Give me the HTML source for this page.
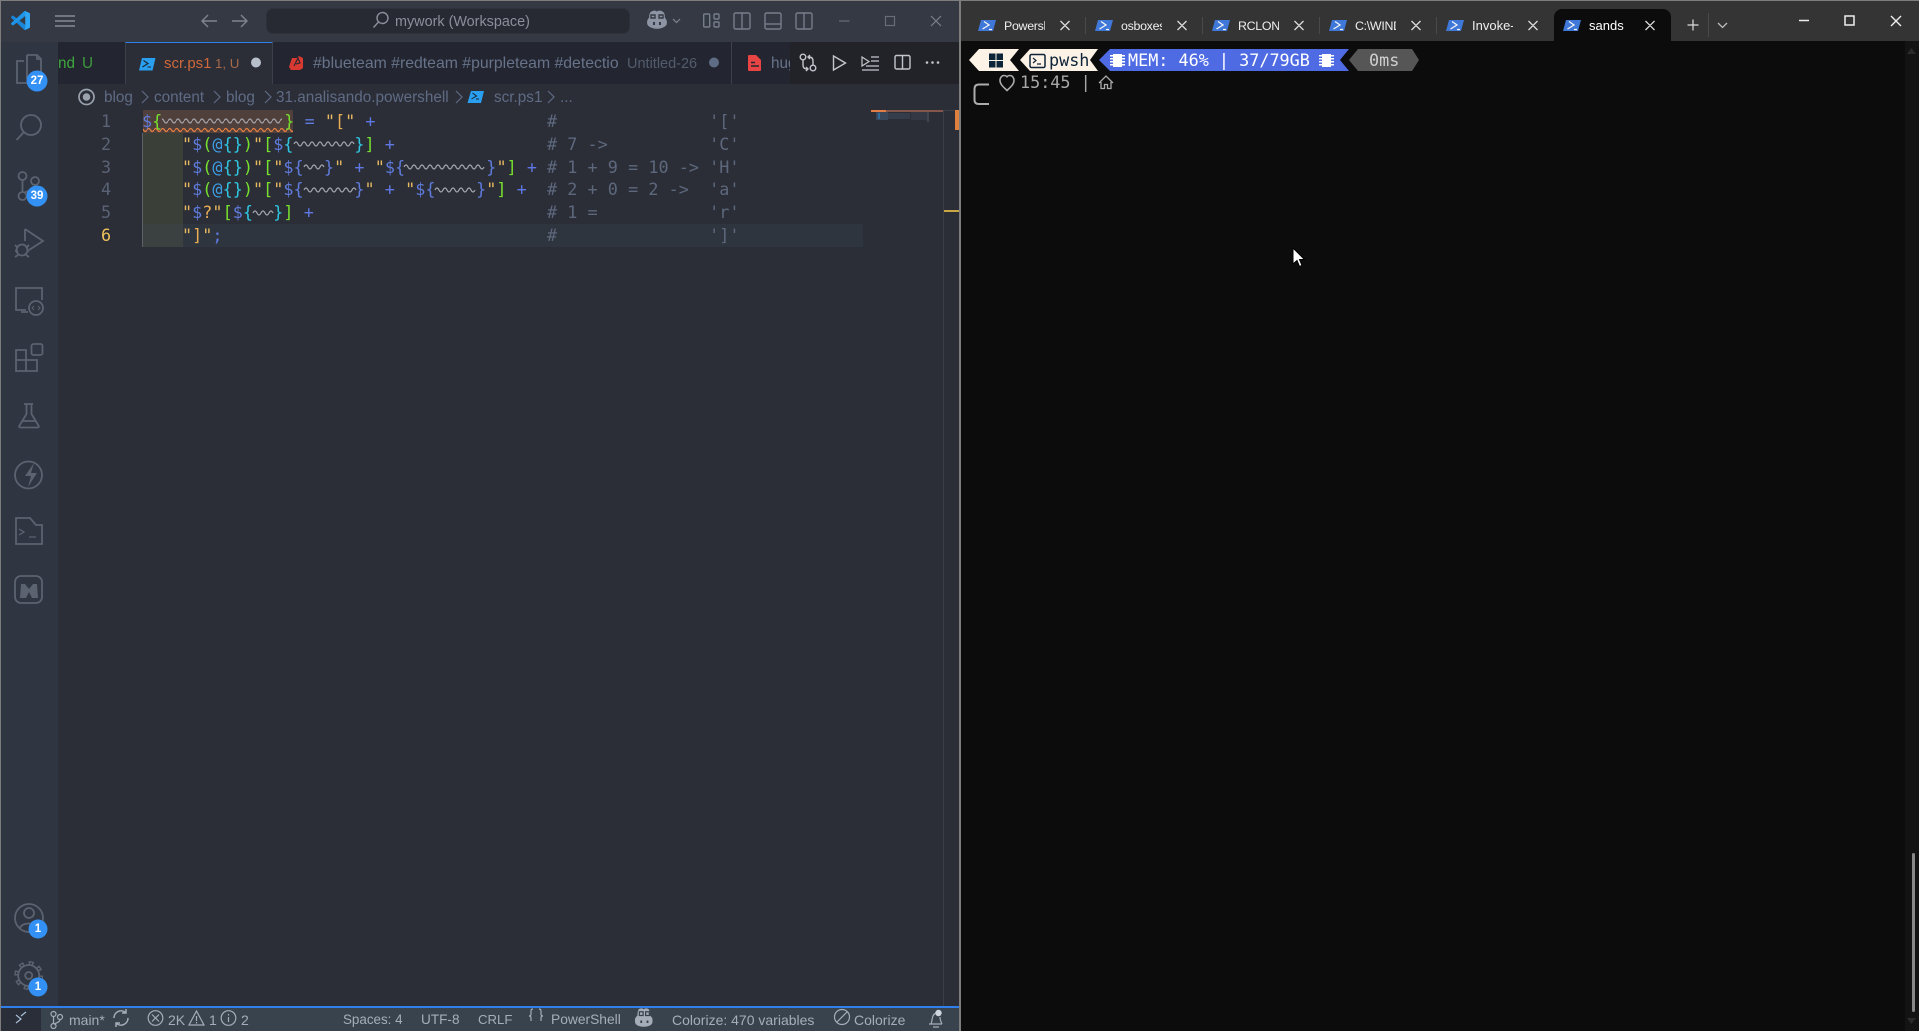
<!DOCTYPE html>
<html><head><meta charset="utf-8"><title>VS Code and Terminal</title>
<style>
html,body{margin:0;padding:0;width:1919px;height:1031px;overflow:hidden;background:#0c0c0c}
#r{position:relative;width:1919px;height:1031px;overflow:hidden;font-family:"Liberation Sans",sans-serif}
.a{position:absolute;white-space:pre}
svg{position:absolute;left:0;top:0;overflow:visible}
.t{font-size:15.3px;line-height:20px}
.l{position:absolute;left:142px;height:22.8px;line-height:22.8px;font-family:"DejaVu Sans Mono","Liberation Mono",monospace;font-size:16.8px;letter-spacing:.03px;white-space:pre;color:#5f7be0}
.n{position:absolute;left:87.5px;width:37px;text-align:center;height:22.8px;line-height:22.8px;font-family:"DejaVu Sans Mono",monospace;font-size:16.8px;color:#5a6375}
.c{position:absolute;left:547px;height:22.8px;line-height:22.8px;font-family:"DejaVu Sans Mono",monospace;font-size:16.8px;letter-spacing:.03px;white-space:pre;color:#5d687d}
i{font-style:normal}
.y{color:#e6b860}.b{color:#5f7bdc}.g{color:#76e02e}.u{color:#2fc6e0}.k{color:#3d9fe6}.p{color:#5f78e6}.o{color:#e8ad55}
.st{position:absolute;top:1010px;font-size:14px;line-height:20px;color:#a5adb8;white-space:pre}
.tb{position:absolute;top:16.5px;font-size:13px;line-height:18px;color:#eee;white-space:pre;overflow:hidden}
.m{position:absolute;font-family:"DejaVu Sans Mono",monospace;font-size:16.8px;line-height:22px;white-space:pre}
</style></head><body><div id="r">

<!-- VS Code backgrounds -->
<div class="a" style="left:0;top:0;width:960px;height:1031px;background:#2b2e37"></div>
<div class="a" style="left:0;top:0;width:960px;height:42px;background:#353943"></div>
<div class="a" style="left:0;top:0;width:1919px;height:1px;background:#7d7d7d"></div>
<div class="a" style="left:0;top:0;width:1px;height:1031px;background:#7d7d7d"></div>
<div class="a" style="left:1px;top:42px;width:57px;height:964px;background:#2f3641"></div>
<div class="a" style="left:58px;top:42px;width:902px;height:42px;background:#232630"></div>
<div class="a" style="left:125px;top:42px;width:148px;height:42px;background:#2b2e37;border-top:1px solid #2f80ed;border-left:1px solid #3c404a;border-right:1px solid #3c404a;box-sizing:border-box"></div>
<div class="a" style="left:731px;top:42px;width:1px;height:42px;background:#3c404a"></div>
<div class="a" style="left:790px;top:42px;width:170px;height:42px;background:#212329"></div>
<div class="a" style="left:266px;top:8px;width:364px;height:26px;background:#272a33;border-radius:7px;border:1px solid #2f323b;box-sizing:border-box"></div>
<div class="a" style="left:1px;top:1006px;width:959px;height:25px;background:#39434e"></div>
<div class="a" style="left:1px;top:1006px;width:40px;height:25px;background:#2a2e39"></div>
<div class="a" style="left:1px;top:1006px;width:959px;height:1.5px;background:#2f80ed"></div>

<!-- editor deco -->
<div class="a" style="left:183px;top:224px;width:680px;height:23px;background:#2f353e"></div>
<div class="a" style="left:143px;top:110px;width:150px;height:23px;background:#50403b"></div>
<div class="a" style="left:143px;top:133px;width:40px;height:91px;background:#3a3f38"></div>
<div class="a" style="left:143px;top:224px;width:40px;height:23px;background:#3b4040"></div>
<div class="a" style="left:142px;top:133px;width:1px;height:114px;background:#5d6168"></div>
<!-- minimap + ruler -->
<div class="a" style="left:871px;top:110px;width:15px;height:2px;background:#e27d43"></div>
<div class="a" style="left:886px;top:110px;width:57px;height:2px;background:#84574a"></div>
<div class="a" style="left:876px;top:112px;width:12px;height:8px;background:#38475a"></div>
<div class="a" style="left:878px;top:113px;width:2px;height:6px;background:#2f6c9c"></div>
<div class="a" style="left:888px;top:113px;width:22px;height:6px;background:#353c4a"></div>
<div class="a" style="left:911px;top:112px;width:18px;height:8px;background:#343844"></div>
<div class="a" style="left:927px;top:112px;width:2px;height:10px;background:#40454f"></div>
<div class="a" style="left:943px;top:110px;width:1px;height:896px;background:#3a3e48"></div>
<div class="a" style="left:943px;top:110px;width:16px;height:1px;background:#3a3e48"></div>
<div class="a" style="left:955px;top:110px;width:4px;height:20px;background:#e0803f"></div>
<div class="a" style="left:944px;top:210px;width:15px;height:2px;background:#c9a545"></div>

<!-- Terminal backgrounds -->
<div class="a" style="left:959px;top:0;width:2px;height:1031px;background:#7d7d7d"></div>
<div class="a" style="left:961px;top:1px;width:958px;height:40px;background:#343434"></div>
<div class="a" style="left:961px;top:41px;width:958px;height:990px;background:#0c0c0c"></div>
<div class="a" style="left:1905px;top:41px;width:14px;height:990px;background:#131313"></div>
<div class="a" style="left:1554px;top:9px;width:117px;height:33px;background:#0c0c0c;border-radius:8px 8px 0 0"></div>

<svg width="1919" height="1031" viewBox="0 0 1919 1031" fill="none">
<defs>
<pattern id="w" width="8" height="8" patternUnits="userSpaceOnUse" patternTransform="translate(0 117)"><path d="M0 4 Q2 0 4 4 T8 4" stroke="#a3a5ae" stroke-width="1.2" fill="none"/></pattern>
<pattern id="ow" width="7" height="6" patternUnits="userSpaceOnUse" patternTransform="translate(0 127)"><path d="M0 3 Q1.75 0 3.5 3 T7 3" stroke="#e27d43" stroke-width="1.3" fill="none"/></pattern>
</defs>
<!-- waves -->
<rect x="162" y="117" width="120" height="8" fill="url(#w)"/>
<rect x="143" y="127" width="150" height="6" fill="url(#ow)"/>
<g stroke="#a3a5ae" stroke-width="1.2">
<path d="M294 144q2-4 4 0t4 0 4 0 4 0 4 0 4 0 4 0 4 0 4 0 4 0 4 0 4 0 4 0 4 0 4 0"/>
<path d="M304 167q2-4 4 0t4 0 4 0 4 0 4 0"/>
<path d="M404 167q2-4 4 0t4 0 4 0 4 0 4 0 4 0 4 0 4 0 4 0 4 0 4 0 4 0 4 0 4 0 4 0 4 0 4 0 4 0 4 0 4 0"/>
<path d="M304 190q2-4 4 0t4 0 4 0 4 0 4 0 4 0 4 0 4 0 4 0 4 0 4 0 4 0 4 0"/>
<path d="M435 190q2-4 4 0t4 0 4 0 4 0 4 0 4 0 4 0 4 0 4 0 4 0"/>
<path d="M253 213q2-4 4 0t4 0 4 0 4 0 4 0"/>
</g>

<!-- vscode logo -->
<g transform="translate(11 11) scale(.19)">
<path d="M96.500 89.200 75.800 99.100c-2.400 1.200-5.200.7-7.100-1.200L1.300 36.500c-1.800-1.700-1.800-4.500 0-6.200l5.500-5c1.500-1.300 3.700-1.400 5.300-.2l81.100 61.500c2.700 2 6.600.1 6.600-3.300v.2c0 2.400-1.400 4.600-3.300 5.900z" fill="#1a86d8"/>
<path d="M96.500 10.800 75.800.9c-2.400-1.200-5.200-.7-7.100 1.200L1.300 63.500c-1.800 1.700-1.800 4.500 0 6.200l5.500 5c1.500 1.300 3.700 1.400 5.300.2L93.200 13.400c2.700-2 6.600-.1 6.600 3.300v-.2c0-2.400-1.400-4.600-3.300-5.700z" fill="#1f95ea"/>
<path d="M75.800 99.100c-2.400 1.200-5.200.7-7.100-1.200 2.300 2.300 6.300.7 6.300-2.600V4.700c0-3.300-4-4.900-6.300-2.600 1.900-1.900 4.700-2.400 7.100-1.200l20.600 9.900c2.200 1 3.600 3.200 3.600 5.600v67.400c0 2.400-1.400 4.600-3.600 5.600z" fill="#2fa5f5"/>
</g>
<!-- hamburger -->
<path d="M55 16h20M55 21h20M55 26h20" stroke="#868b96" stroke-width="1.4"/>
<!-- arrows -->
<path d="M217 21h-15M208 15l-6 6 6 6" stroke="#7f8590" stroke-width="1.4"/>
<path d="M232 21h15M241 15l6 6-6 6" stroke="#7f8590" stroke-width="1.4"/>
<!-- search -->
<circle cx="382.500" cy="18" r="5.500" stroke="#8a8f9b" stroke-width="1.400"/><path d="M378.500 22l-5 5.500" stroke="#8a8f9b" stroke-width="1.400"/>
<!-- copilot -->
<g stroke="#8d94a3" stroke-width="1.800">
<path d="M651 13c2-2 5-2 6 0 1-2 4-2 6 0 1 1 1 3 1 5 1 1 2 2 2 4v1c0 3-5 5-9 5s-9-2-9-5v-1c0-2 1-3 2-4 0-2 0-4 1-5z" fill="#8d94a3"/>
<path d="M651 15h4v3h-4zM659 15h4v3h-4z" stroke="#353943" stroke-width="1.400"/>
<path d="M654 22v3M660 22v3" stroke="#353943" stroke-width="2"/>
</g>
<path d="M673 19l3.500 3.500 3.500-3.500" stroke="#7f8590" stroke-width="1.200"/>
<!-- layout icons -->
<g stroke="#767d8b" stroke-width="1.400">
<rect x="703.700" y="14" width="6" height="13" rx="1"/><rect x="714" y="14" width="5" height="5" rx="1"/><rect x="714" y="22" width="5" height="5" rx="1"/>
<rect x="734" y="13" width="16" height="16" rx="1.500"/><path d="M742 13v16"/>
<rect x="765" y="13" width="16" height="16" rx="1.500"/><path d="M765 24h16"/>
<rect x="796" y="13" width="16" height="16" rx="1.500"/><path d="M804 13v16"/>
</g>
<path d="M839 21h10.500" stroke="#686e79" stroke-width="1.200"/>
<rect x="885.500" y="16.500" width="9" height="9" stroke="#686e79" stroke-width="1.200"/>
<path d="M931 16l10 10M941 16l-10 10" stroke="#7b818c" stroke-width="1.200"/>

<!-- Activity bar icons -->
<g stroke="#5b6270" stroke-width="1.800">
<path d="M27 55h10l4 4v16M27 55v5M24 61h-7v22h19v-2"/><path d="M27 55v23h14M37 55v4h4"/>
<circle cx="31" cy="125" r="10"/><path d="M24 132l-7.500 8"/>
<circle cx="22.500" cy="176" r="4"/><circle cx="22.500" cy="196" r="4"/><circle cx="35" cy="181" r="4"/><path d="M22.500 180v12M35 185c0 5-8 6-11 8"/>
<path d="M25 229l18 12-14 9M25 229v12"/><circle cx="22" cy="250" r="5.500"/><path d="M15 245l3 3M15 251h3M15 257l3-2M29 245l-3 3M29 251h-2M29 257l-3-2"/>
<path d="M26 310H16v-22h26v12M21 312h7"/><circle cx="36" cy="308" r="7"/><path d="M34 306l-2 2 2 2M38 306l2 2-2 2" stroke-width="1"/>
<path d="M16 350h10v10h11v11H16zM16 360h10v11"/><rect x="31.500" y="344" width="11" height="11" rx="2"/>
<path d="M24 404h9M26.500 404v10l-7 11.500q-1 2 1 2h17q2 0 1-2l-7-11.500v-10M22 421h14"/>
<circle cx="28.500" cy="475" r="13.500"/>
<path d="M16 518h14l6 7h6v19H16z"/><path d="M19 529l5 3-5 3M29 537h7" stroke-width="1.300"/>
<rect x="15" y="576" width="27" height="27" rx="6"/>
<circle cx="29" cy="918" r="14"/><circle cx="29" cy="913" r="5"/><path d="M20 928c2-6 16-6 18 0"/>
<!-- gear -->
<circle cx="28.700" cy="975.500" r="3.500"/>
<circle cx="28.700" cy="975.500" r="10.500"/>
<circle cx="28.700" cy="975.500" r="12.500" stroke-width="4" pathLength="80" stroke-dasharray="5 5"/>
<circle cx="28.700" cy="975.500" r="12.300" stroke-width="1.600" stroke="#2f3641" pathLength="80" stroke-dasharray="2 8" stroke-dashoffset="-1.500"/>
</g>
<path d="M34 463l-9 13h6l-3 11 9-14h-6z" fill="#5b6270"/>
<path d="M21 584l4 0 4 5 4-5 4 0 1 14h-6l-3-6-3 6h-6z" fill="#5b6270"/>
<!-- badges -->
<g fill="#3390f5"><circle cx="37" cy="81" r="10.500"/><circle cx="37" cy="196" r="10.500"/><circle cx="38" cy="929" r="9.500"/><circle cx="38" cy="987" r="9.500"/></g>

<!-- breadcrumbs -->
<circle cx="86.500" cy="97" r="7.500" stroke="#99a2ad" stroke-width="1.700"/><circle cx="86.500" cy="97" r="3.800" fill="#99a2ad"/>
<g stroke="#5f6b85" stroke-width="1.200">
<path d="M142 91l6 6-6 6M214 91l6 6-6 6M265 91l6 6-6 6M456 91l6 6-6 6M548 91l6 6-6 6"/>
</g>
<!-- PS icons tab -->
<g>
<path d="M142 58h13.500l-3 12.500H139z" fill="#2a9ff0"/><path d="M143.500 60.500l4.500 3-5.500 3.500M147.500 67h3.500" stroke="#1a2330" stroke-width="1.100"/>
<path d="M471 91h13l-3 12h-13.500z" fill="#2a9ff0"/><path d="M472.500 93l4 3-5 3M476 99h3" stroke="#1a2330" stroke-width="1"/>
</g>
<circle cx="256" cy="62.500" r="5" fill="#b7bfcb"/>
<circle cx="714" cy="62.500" r="5" fill="#5f6c85"/>
<!-- red icons -->
<path d="M292 58h5l2-2 4 2v10l-3 2h-9l-2-3z" fill="#d83a32"/><path d="M294 66l4-8 2 5-4 1" stroke="#232630" stroke-width="1.100"/>
<path d="M749 55h7l5 5v10q0 1-1 1h-11q-1 0-1-1V56q0-1 1-1z" fill="#e84444"/><path d="M751 62.500h4M751 66h8" stroke="#232630" stroke-width="1.400"/>
<!-- action icons -->
<g stroke="#c3c7cd" stroke-width="1.400">
<circle cx="803" cy="57" r="2.800"/><circle cx="813" cy="68" r="2.800"/><path d="M803 60v5q0 4 4 4M813 65v-4q0-4-4-4M806 71l2-2-2-2M810 59l-2-2 2-2" />
<path d="M833.500 56l12 7-12 7z"/>
<path d="M862 57l7 4.500-7 4.500zM871 57h8M871 61h8M866 66h13M862 70h17" stroke-width="1.200"/>
<rect x="895" y="55.500" width="15" height="13.500" rx="1.500"/><path d="M902.500 55.500v13.500"/>
</g>
<g fill="#c3c7cd"><circle cx="927" cy="62.500" r="1.300"/><circle cx="932.500" cy="62.500" r="1.300"/><circle cx="938" cy="62.500" r="1.300"/></g>

<!-- Status icons -->
<g stroke="#a5adb8" stroke-width="1.200">
<path d="M16 1015l5 4-5 4M26 1012l-5 4" stroke="#a9c0d8"/>
<circle cx="53.500" cy="1014" r="2.500"/><circle cx="53.500" cy="1026" r="2.500"/><circle cx="60" cy="1017" r="2.500"/><path d="M53.500 1016.500v7M60 1019.500c0 3-4 3-6 5"/>
<path d="M114 1018a7 7 0 0 1 12-5M128 1018a7 7 0 0 1-12 5M126 1009v4h-4M116 1027v-4h4" stroke-width="1.500"/>
<circle cx="155.500" cy="1018" r="7.300"/><path d="M152 1014.500l7 7M159 1014.500l-7 7"/>
<path d="M196.500 1011l7.500 14h-15zM196.500 1016v5M196.500 1022v1.500"/>
<circle cx="228.500" cy="1018" r="7.300"/><path d="M228.500 1017v5M228.500 1014v1.500"/>
<path d="M532 1012q-2 0-2 2v3q0 2-2 2 2 0 2 2v3M538 1012q2 0 2 2v3q0 2 2 2-2 0-2 2v3" transform="translate(1 -3)"/>
<circle cx="842" cy="1017" r="7.500"/><path d="M837 1022l10-10"/>
<path d="M929 1024h13M931 1024c1-2 1-6 2-8 1-3 4-3 6-3M940 1017c0 3 1 5 2 7M933 1027h6"/>
</g>
<g transform="translate(645 1018) scale(1.250) translate(-645 -1018)">
<path d="M640 1011c1-1 3-1 4 0 1-1 3-1 4 0 1 2 1 3 1 5 1 1 2 2 2 3v2c0 3-4 4-7 4s-7-1-7-4v-2c0-1 1-2 2-3 0-2 0-3 1-5z" fill="#a5adb8"/>
<path d="M640.500 1013h3v3h-3zM645.500 1013h3v3h-3z" stroke="#39434e"/><path d="M642 1020v2M647 1020v2" stroke="#39434e" stroke-width="1.500"/>
</g>
<circle cx="938.500" cy="1013" r="3.200" fill="#cfd5dc"/>

<!-- Terminal tab icons -->
<g fill="#3f78d8" stroke="none">
<path d="M981 20h15l-3 11h-15zM1098 20h15l-3 11h-15zM1215 20h15l-3 11h-15zM1332 20h15l-3 11h-15zM1449 20h15l-3 11h-15zM1566 20h15l-3 11h-15z"/>
</g>
<g stroke="#f2f4f8" stroke-width="1.300">
<path d="M984 21.500l5 3.500-6.500 4M989 29.500h3M1101 21.500l5 3.500-6.500 4M1106 29.500h3M1218 21.500l5 3.500-6.500 4M1223 29.500h3M1335 21.500l5 3.500-6.500 4M1340 29.500h3M1452 21.500l5 3.500-6.500 4M1457 29.500h3M1569 21.500l5 3.500-6.500 4M1574 29.500h3"/>
</g>
<g stroke="#dcdcdc" stroke-width="1.300">
<path d="M1060.500 21l9 9M1069.500 21l-9 9M1177.500 21l9 9M1186.500 21l-9 9M1294.500 21l9 9M1303.500 21l-9 9M1411.500 21l9 9M1420.500 21l-9 9M1528.500 21l9 9M1537.500 21l-9 9M1645.500 21l9 9M1654.500 21l-9 9"/>
<path d="M1693 19.500v11M1687.500 25h11" stroke-width="1.200"/>
<path d="M1718 23l4.500 4.500 4.500-4.500" stroke="#bcbcbc"/>
<path d="M1799 20.500h10" stroke-width="1.500" stroke="#eee"/>
<rect x="1845" y="16" width="9" height="9" stroke="#eee" stroke-width="1.500"/>
<path d="M1891 16l10 10M1901 16l-10 10" stroke="#eee" stroke-width="1.400"/>
</g>
<path d="M1085.500 17v17M1202.500 17v17M1319.500 17v17M1436.500 17v17M1708.500 13v24" stroke="#4a4a4a" stroke-width="1"/>

<!-- Prompt -->
<path d="M969 60l10-11h40l-9 11 9 11h-40z" fill="#fdf2e6"/>
<path d="M1020 60l10-11h68l-8 11 8 11h-68z" fill="#fdf2e6"/>
<path d="M1099 60l11-11h239l-9 11 9 11h-239z" fill="#4f6be3"/>
<path d="M1349 60l9-11h54l7 11-7 11h-54z" fill="#565656"/>
<path d="M989 53.500h6.500v6.500H989zM996.500 53.500h6.500v6.500h-6.500zM989 61h6.500v6.500H989zM996.500 61h6.500v6.500h-6.500z" fill="#0d2438"/>
<rect x="1030" y="54.500" width="15" height="13" rx="1.500" stroke="#0d2438" stroke-width="1.500"/>
<path d="M1033 58l3 2.500-3 2.500M1037 64h4" stroke="#0d2438" stroke-width="1.200"/>
<g fill="#fff">
<rect x="1113" y="54" width="9" height="13"/><rect x="1322" y="54" width="9" height="13"/>
<path d="M1110 55h15v1.500h-15zM1110 58h15v1.500h-15zM1110 61h15v1.500h-15zM1110 64h15v1.500h-15zM1319 55h15v1.500h-15zM1319 58h15v1.500h-15zM1319 61h15v1.500h-15zM1319 64h15v1.500h-15z"/>
</g>
<path d="M1007 90.500c-3-3-7-6-7-10 0-3 2-5 4-5 2 0 3 1 3 2 0-1 1-2 3-2 2 0 4 2 4 5 0 4-4 7-7 10z" stroke="#aaa" stroke-width="1.600"/>
<path d="M1099 83l7-7 7 7M1101 82v6.500h3.500v-4h3v4h3.500V82" stroke="#aaa" stroke-width="1.300"/>
<path d="M989 84.500h-10q-4.500 0-4.500 4.500v11q0 4 4.500 4h10" stroke="#adadad" stroke-width="2"/>
<!-- scrollbar -->
<rect x="1912" y="853" width="3" height="159" rx="1.500" fill="#888"/>
<path d="M1907 1018h9l-4.500 6z" fill="#2a2a2a"/>
<path d="M1907 54h9l-4.500-6z" fill="#2a2a2a"/>
<!-- cursor -->
<path d="M1293 248v16l4-3.500 2.500 6 2.500-1-2.500-6h5z" fill="#fff" stroke="#000" stroke-width="1"/>
</svg>

<!-- text: title -->
<div class="a" style="left:395px;top:12px;font-size:14.4px;line-height:20px;color:#8a8f9b">mywork (Workspace)</div>
<!-- badge text -->
<div class="a" style="left:27px;top:74px;width:20px;text-align:center;font-size:11.5px;font-weight:bold;color:#fff;line-height:14px">27</div>
<div class="a" style="left:27px;top:189px;width:20px;text-align:center;font-size:11.5px;font-weight:bold;color:#fff;line-height:14px">39</div>
<div class="a" style="left:28px;top:922px;width:20px;text-align:center;font-size:11.5px;font-weight:bold;color:#fff;line-height:14px">1</div>
<div class="a" style="left:28px;top:980px;width:20px;text-align:center;font-size:11.5px;font-weight:bold;color:#fff;line-height:14px">1</div>
<!-- tabs -->
<div class="a t" style="left:58px;top:54px;color:#3ea83e">nd</div>
<div class="a t" style="left:82px;top:54px;color:#3c9a3c">U</div>
<div class="a t" style="left:164px;top:54px;color:#cf683b;font-size:15px">scr.ps1</div>
<div class="a" style="left:215px;top:54px;font-size:13.3px;line-height:20px;color:#a8684a">1, U</div>
<div class="a t" style="left:313px;top:54px;color:#67738a;width:307px;overflow:hidden;font-size:15.8px">#blueteam #redteam #purpleteam #detectio</div>
<div class="a" style="left:627px;top:54px;font-size:14.5px;line-height:20px;color:#535c6d">Untitled-26</div>
<div class="a t" style="left:771px;top:54px;color:#67738a;width:19px;overflow:hidden">hug</div>
<!-- breadcrumbs -->
<div class="a t" style="left:104px;top:88px;color:#5f6b85">blog</div>
<div class="a t" style="left:154px;top:88px;color:#5f6b85">content</div>
<div class="a t" style="left:226px;top:88px;color:#5f6b85">blog</div>
<div class="a t" style="left:276px;top:88px;color:#5f6b85">31.analisando.powershell</div>
<div class="a t" style="left:494px;top:88px;color:#5f6b85">scr.ps1</div>
<div class="a t" style="left:560px;top:88px;color:#5f6b85">...</div>
<!-- line numbers -->
<div class="n" style="top:110px">1</div><div class="n" style="top:133px">2</div><div class="n" style="top:155.5px">3</div><div class="n" style="top:178px">4</div><div class="n" style="top:201px">5</div><div class="n" style="top:224px;color:#eec25a">6</div>
<!-- code -->
<div class="l" style="top:110px"><i class="b">$</i><i class="g">{</i><i style="display:inline-block;width:122px"></i><i class="g">}</i> <i style="color:#5f7be0">=</i> <i class="y">"</i><i class="o">[</i><i class="y">"</i> <i class="p">+</i></div>
<div class="l" style="top:133px;left:182px"><i class="y">"</i><i class="b">$</i><i class="g">(</i><i class="k">@</i><i class="u">{}</i><i class="g">)</i><i class="y">"</i><i class="g">[</i><i class="b">$</i><i class="u">{</i><i style="display:inline-block;width:60.8px"></i><i class="u">}</i><i class="g">]</i> <i class="p">+</i></div>
<div class="l" style="top:155.5px;left:182px"><i class="y">"</i><i class="b">$</i><i class="g">(</i><i class="k">@</i><i class="u">{}</i><i class="g">)</i><i class="y">"</i><i class="g">[</i><i class="y">"</i><i class="b">${</i><i style="display:inline-block;width:20.3px"></i><i class="b">}</i><i class="y">"</i> <i class="p">+</i> <i class="y">"</i><i class="b">${</i><i style="display:inline-block;width:81.2px"></i><i class="b">}</i><i class="y">"</i><i class="g">]</i> <i class="p">+</i></div>
<div class="l" style="top:178px;left:182px"><i class="y">"</i><i class="b">$</i><i class="g">(</i><i class="k">@</i><i class="u">{}</i><i class="g">)</i><i class="y">"</i><i class="g">[</i><i class="y">"</i><i class="b">${</i><i style="display:inline-block;width:50.7px"></i><i class="b">}</i><i class="y">"</i> <i class="p">+</i> <i class="y">"</i><i class="b">${</i><i style="display:inline-block;width:40.6px"></i><i class="b">}</i><i class="y">"</i><i class="g">]</i> <i class="p">+</i></div>
<div class="l" style="top:201px;left:182px"><i class="y">"</i><i class="b">$</i><i class="o">?</i><i class="y">"</i><i class="g">[</i><i class="b">$</i><i class="u">{</i><i style="display:inline-block;width:20.3px"></i><i class="u">}</i><i class="g">]</i> <i class="p">+</i></div>
<div class="l" style="top:224px;left:182px"><i class="y">"</i><i class="o">]</i><i class="y">"</i><i class="p">;</i></div>
<!-- comments -->
<div class="c" style="top:110px">#               '['</div>
<div class="c" style="top:133px"># 7 ->          'C'</div>
<div class="c" style="top:155.5px"># 1 + 9 = 10 -> 'H'</div>
<div class="c" style="top:178px"># 2 + 0 = 2 ->  'a'</div>
<div class="c" style="top:201px"># 1 =           'r'</div>
<div class="c" style="top:224px">#               ']'</div>
<!-- status -->
<div class="st" style="left:69px">main*</div>
<div class="st" style="left:168px">2K</div>
<div class="st" style="left:209px">1</div>
<div class="st" style="left:241px">2</div>
<div class="st" style="left:343px;font-size:13.4px">Spaces: 4</div>
<div class="st" style="left:421px;font-size:13.6px">UTF-8</div>
<div class="st" style="left:478px;font-size:13.2px">CRLF</div>
<div class="st" style="left:551px;font-size:13.8px">PowerShell</div>
<div class="st" style="left:672px;font-size:14px">Colorize: 470 variables</div>
<div class="st" style="left:854px">Colorize</div>
<!-- term tabs -->
<div class="tb" style="left:1004px;width:41px;letter-spacing:-.3px;font-size:12.4px">Powershell</div>
<div class="tb" style="left:1121px;width:41px;letter-spacing:-.3px;font-size:12.4px">osboxes</div>
<div class="tb" style="left:1238px;width:41px;letter-spacing:-.3px;font-size:12.4px">RCLONE</div>
<div class="tb" style="left:1355px;width:41px;letter-spacing:-.3px;font-size:12.4px">C:\WINDOWS</div>
<div class="tb" style="left:1472px;width:41px">Invoke-</div>
<div class="tb" style="left:1589px;width:41px;color:#fff">sands</div>
<!-- prompt text -->
<div class="m" style="left:1049px;top:49px;color:#0d2438">pwsh</div>
<div class="m" style="left:1128px;top:49px;color:#fff">MEM: 46% | 37/79GB</div>
<div class="m" style="left:1369px;top:49px;color:#cfcfcf">0ms</div>
<div class="m" style="left:1020px;top:71px;color:#a8a8a8">15:45 |</div>
</div></body></html>
